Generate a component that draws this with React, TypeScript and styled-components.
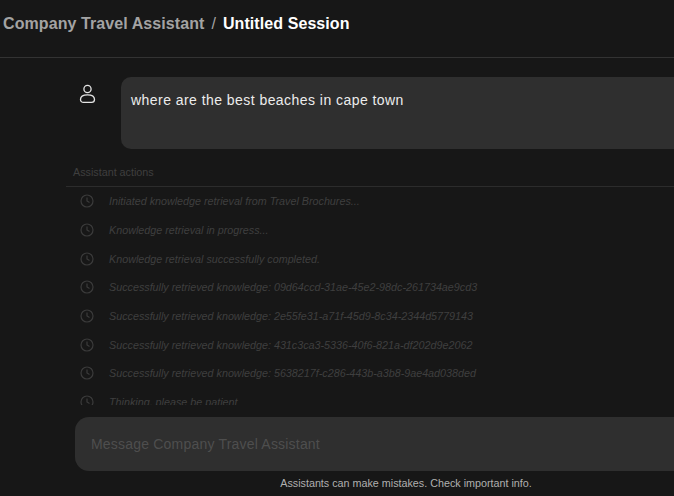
import styled, { createGlobalStyle } from 'styled-components'

const GlobalStyle = createGlobalStyle`
    html, body {
        margin: 0;
        height: 100%;
        overflow: hidden;
        background-color: #171717;
    }
    * {
        box-sizing: border-box;
    }
`

const Page = styled.div`
    width: 812px;
    height: 496px;
    display: flex;
    flex-direction: column;
    overflow: hidden;
    background-color: #171717;
    font-family: "Liberation Sans", Arial, sans-serif;
`

const Header = styled.header`
    height: 58px;
    flex: none;
    display: flex;
    align-items: flex-start;
    gap: 7px;
    padding: 15px 0 0 3px;
    border-bottom: 1px solid #333333;
    font-size: 16px;
    line-height: 18px;
    font-weight: 700;
    letter-spacing: 0.08px;
`

const Crumb = styled.span<{ $current?: boolean }>`
    color: ${(p) => (p.$current ? '#ffffff' : '#a3a3a3')};
`

const Separator = styled.span`
    color: #a3a3a3;
    font-weight: 400;
`

const Thread = styled.main`
    flex: 1;
    min-height: 0;
    display: flex;
    flex-direction: column;
    padding-top: 19px;
`

const UserRow = styled.div`
    display: flex;
    flex: none;
    gap: 25px;
    padding-left: 79px;
`

const Avatar = styled.svg`
    width: 17px;
    height: 20px;
    margin-top: 7px;
    flex: none;
    color: #e5e5e5;
`

const Bubble = styled.div`
    flex: 1;
    height: 72px;
    padding: 15px 10px;
    border-radius: 10px;
    background-color: #2f2f2f;
    color: #ececec;
    font-size: 14px;
    line-height: 17px;
    letter-spacing: 0.45px;
`

const ActionsTitle = styled.div`
    flex: none;
    margin: 16px 0 0 66px;
    height: 22px;
    padding: 1px 0 0 7px;
    border-bottom: 1px solid #2c2c2c;
    color: #3f3f3f;
    font-size: 10.75px;
    line-height: 13px;
`

const ActionList = styled.ul`
    flex: none;
    height: 218px;
    margin: 0;
    padding: 0 0 0 80px;
    list-style: none;
    overflow: hidden;
`

const ActionRow = styled.li`
    display: flex;
    align-items: center;
    height: 28.7px;
    gap: 15px;
    color: #3f3f3f;
    font-size: 10.76px;
    font-style: italic;
`

const ClockIcon = styled.svg`
    width: 14px;
    height: 14px;
    flex: none;
    color: #3b3b3b;
`

const Composer = styled.div`
    flex: none;
    height: 54px;
    margin: 12px 75px 0;
    padding-left: 16px;
    display: flex;
    align-items: center;
    border-radius: 14px;
    background-color: #2f2f2f;
    color: #4e4e4e;
    font-size: 14px;
    letter-spacing: 0.2px;
`

const Disclaimer = styled.div`
    flex: none;
    height: 25px;
    padding-top: 6px;
    text-align: center;
    color: #b0b0b0;
    font-size: 10.75px;
    line-height: 13px;
`

const actions = [
    'Initiated knowledge retrieval from Travel Brochures...',
    'Knowledge retrieval in progress...',
    'Knowledge retrieval successfully completed.',
    'Successfully retrieved knowledge: 09d64ccd-31ae-45e2-98dc-261734ae9cd3',
    'Successfully retrieved knowledge: 2e55fe31-a71f-45d9-8c34-2344d5779143',
    'Successfully retrieved knowledge: 431c3ca3-5336-40f6-821a-df202d9e2062',
    'Successfully retrieved knowledge: 5638217f-c286-443b-a3b8-9ae4ad038ded',
    'Thinking, please be patient',
]

const App = () => {
    return (
        <Page>
            <GlobalStyle />
            <Header>
                <Crumb>Company Travel Assistant</Crumb>
                <Separator>/</Separator>
                <Crumb $current>Untitled Session</Crumb>
            </Header>
            <Thread>
                <UserRow>
                    <Avatar viewBox="0 0 17 20" fill="none" stroke="currentColor" strokeWidth="1.3">
                        <circle cx="8.5" cy="5" r="3.6" />
                        <path d="M1.5 15.5c0-3 3-4.6 7-4.6s7 1.6 7 4.6c0 1.8-1.2 2.9-3 2.9H4.5c-1.8 0-3-1.1-3-2.9z" />
                    </Avatar>
                    <Bubble>where are the best beaches in cape town</Bubble>
                </UserRow>
                <ActionsTitle>Assistant actions</ActionsTitle>
                <ActionList>
                    {actions.map((action) => (
                        <ActionRow key={action}>
                            <ClockIcon viewBox="0 0 14 14" fill="none" stroke="currentColor" strokeWidth="1.2">
                                <circle cx="7" cy="7" r="6" />
                                <path d="M7 3.5V7l2.5 1.5" />
                            </ClockIcon>
                            {action}
                        </ActionRow>
                    ))}
                </ActionList>
                <Composer>Message Company Travel Assistant</Composer>
                <Disclaimer>Assistants can make mistakes. Check important info.</Disclaimer>
            </Thread>
        </Page>
    )
}

export default App
